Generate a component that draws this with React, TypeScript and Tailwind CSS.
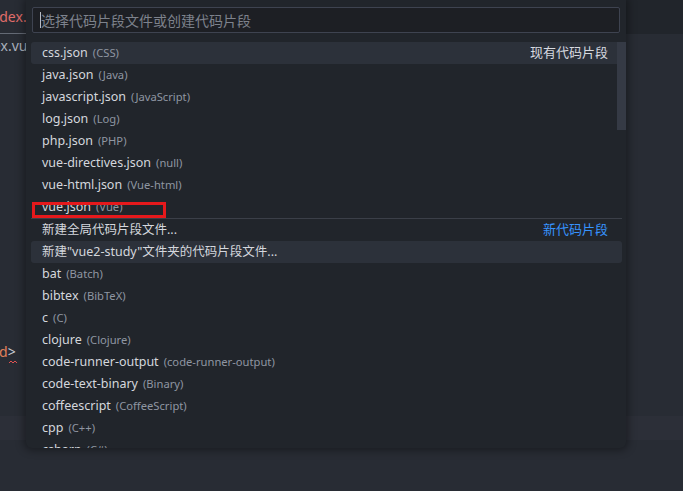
import React from "react";

const FONT = { fontFamily: '"Segoe UI", "Noto Sans", "Noto Sans CJK SC", sans-serif' };

// Snippet file list
const EXISTING = [
  { name: "css.json", desc: "CSS" },
  { name: "java.json", desc: "Java" },
  { name: "javascript.json", desc: "JavaScript" },
  { name: "log.json", desc: "Log" },
  { name: "php.json", desc: "PHP" },
  { name: "vue-directives.json", desc: "null" },
  { name: "vue-html.json", desc: "Vue-html" },
  { name: "vue.json", desc: "Vue" },
];

const LANGS = [
  { name: "bat", desc: "Batch" },
  { name: "bibtex", desc: "BibTeX" },
  { name: "c", desc: "C" },
  { name: "clojure", desc: "Clojure" },
  { name: "code-runner-output", desc: "code-runner-output" },
  { name: "code-text-binary", desc: "Binary" },
  { name: "coffeescript", desc: "CoffeeScript" },
  { name: "cpp", desc: "C++" },
  { name: "csharp", desc: "C#" },
];

function Row({
  name,
  desc,
  label,
  labelBlue,
  active,
  border,
}: {
  name: string;
  desc?: string;
  label?: string;
  labelBlue?: boolean;
  active?: boolean;
  border?: boolean;
}) {
  return (
    <div className={`${border ? "border-t border-[#3b3f48]" : ""}`}>
      <div
        className={`flex items-center h-[22px] pl-[11px] pr-[14px] rounded-[3px] ${
          active ? "bg-[#2c313a]" : ""
        }`}
      >
        <span className="text-[12.5px] text-[#d4d7dd] whitespace-nowrap">{name}</span>
        {desc && (
          <span className="ml-[5px] text-[11.2px] text-[#8f96a2] whitespace-nowrap">({desc})</span>
        )}
        {label && (
          <span
            className={`ml-auto text-[13px] whitespace-nowrap ${
              labelBlue ? "text-[#3794ff]" : "text-[#d7dae0]"
            }`}
          >
            {label}
          </span>
        )}
      </div>
    </div>
  );
}

function Palette() {
  return (
    <div className="absolute left-[26px] top-0 w-[600px] h-[448px] bg-[#21252b] rounded-b-[6px] shadow-[0_0_8px_2px_rgba(0,0,0,0.4)] overflow-hidden">
      {/* Input */}
      <div className="mx-[6px] mt-[7px] h-[26px] border border-[#3e4350] rounded-[2px] bg-[#1d1f24] flex items-center pl-[7px]">
        <span className="w-px h-[16px] bg-[#b8bcc4]" />
        <span className="text-[14px] text-[#7d828c] whitespace-nowrap">选择代码片段文件或创建代码片段</span>
      </div>

      {/* List */}
      <div className="relative flex mt-[9px] pl-[5px]">
        <div className="flex-1 flex flex-col pr-[4px]">
          {EXISTING.map((it, i) => (
            <Row
              key={it.name}
              name={it.name}
              desc={it.desc}
              label={i === 0 ? "现有代码片段" : undefined}
              active={i === 0}
            />
          ))}
          <Row name="新建全局代码片段文件..." label="新代码片段" labelBlue border />
          <Row name={'新建"vue2-study"文件夹的代码片段文件...'} active />
          {LANGS.map((it) => (
            <Row key={it.name} name={it.name} desc={it.desc} />
          ))}
        </div>
        {/* Scrollbar */}
        <div className="absolute right-0 top-0 w-[9px] h-[88px] bg-[#353a45]" />
        {/* Red annotation box */}
        <div className="absolute left-[6px] top-[160px] w-[134px] h-[16px] border-[3px] border-[#e5191c]" />
      </div>
    </div>
  );
}

export default function App() {
  return (
    <div className="relative w-[683px] h-[491px] overflow-hidden bg-[#282c34]" style={FONT}>
      {/* Editor behind */}
      <div className="flex flex-col h-full">
        <div className="h-[34px] bg-[#21252b] flex">
          <div className="w-[60px] h-full bg-[#282c34] border-b border-[#646a75] flex items-center overflow-hidden">
            <span className="-ml-[13px] text-[14px] text-[#e06c6a] whitespace-nowrap">index.vue</span>
          </div>
        </div>
        <div className="h-[22px] flex items-center overflow-hidden">
          <span className="-ml-[28px] text-[14px] text-[#a9b0bc] whitespace-nowrap">index.vue</span>
        </div>
        <div className="h-[286px]" />
        <div className="h-[18px] flex items-center overflow-hidden relative">
          <span className="-ml-[1px] text-[14px] whitespace-nowrap">
            <span className="text-[#e0805a]">d</span>
            <span className="text-[#c8ccd4]">&gt;</span>
          </span>
        </div>
        <div className="h-[6px] pl-[9px]">
          <svg width="8" height="4" viewBox="0 0 8 4">
            <path d="M0 3 L2 1 L4 3 L6 1 L8 3" stroke="#e05252" strokeWidth="1" fill="none" />
          </svg>
        </div>
        <div className="h-[50px]" />
        <div className="h-[24px] bg-[#2c2f38]" />
      </div>

      <Palette />
    </div>
  );
}
